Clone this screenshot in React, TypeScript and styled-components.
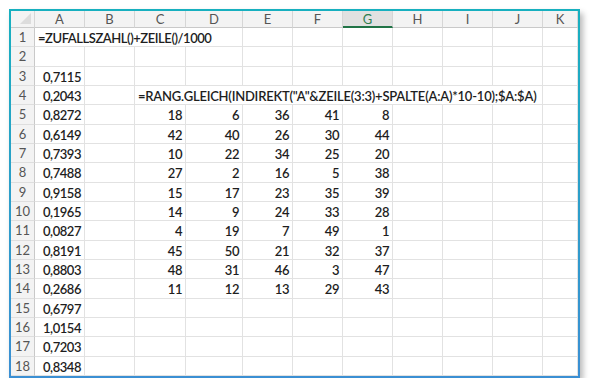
import React from "react"
import styled, { createGlobalStyle } from "styled-components"

const GlobalStyle = createGlobalStyle`
  html, body {
    margin: 0;
    padding: 0;
    background: #ffffff;
  }
`

const COLS = ["A", "B", "C", "D", "E", "F", "G", "H", "I", "J", "K"]

const Page = styled.div`
  padding: 9px 0 0 9px;
`

const Frame = styled.div`
  width: 571px;
  padding: 2px;
  box-sizing: border-box;
  background: linear-gradient(180deg, #17b0bf 0%, #2aa0c8 45%, #3b8fd3 100%);
  box-shadow: 3px 4px 6px rgba(0, 0, 0, 0.28);
`

const Sheet = styled.div`
  display: grid;
  grid-template-columns: 24px 50px 50px 51px 57px repeat(6, 50px) 35px;
  grid-template-rows: 17px repeat(18, 19.33px);
  background: #ffffff;
  font-family: Lato, "Liberation Sans", sans-serif;
  font-size: 13px;
  letter-spacing: -0.45px;
  color: #1e1e1e;
  overflow: hidden;
`

const Corner = styled.div`
  position: relative;
  background: #f3f3f3;
  border-right: 1px solid #d6d6d6;
  border-bottom: 1px solid #c9c9c9;

  &::after {
    content: "";
    position: absolute;
    right: 3px;
    bottom: 3px;
    border-left: 11px solid transparent;
    border-bottom: 11px solid #dcdcdc;
  }
`

const ColHeader = styled.div<{ $selected?: boolean }>`
  display: flex;
  align-items: center;
  justify-content: center;
  box-sizing: border-box;
  background: ${p => (p.$selected ? "#e1e1e1" : "#f3f3f3")};
  color: ${p => (p.$selected ? "#2f7d4f" : "#555555")};
  border-right: 1px solid #d6d6d6;
  border-bottom: ${p => (p.$selected ? "2px solid #217346" : "1px solid #c9c9c9")};
  font-size: 13px;
  letter-spacing: 0;
`

const RowHeader = styled.div`
  display: flex;
  align-items: center;
  justify-content: center;
  background: #f3f3f3;
  color: #555555;
  border-right: 1px solid #c9c9c9;
  border-bottom: 1px solid #dedede;
  font-size: 13px;
  letter-spacing: 0;
`

const Cell = styled.div<{ $align: "left" | "right"; $span: number; $tracking: number }>`
  grid-column: span ${p => p.$span};
  display: flex;
  align-items: center;
  justify-content: ${p => (p.$align === "right" ? "flex-end" : "flex-start")};
  padding: 2px 3px 0 3px;
  box-sizing: border-box;
  border-right: 1px solid #e2e2e2;
  border-bottom: 1px solid #e2e2e2;
  white-space: nowrap;
  font-weight: 600;
  letter-spacing: ${p => p.$tracking}px;
`

type Entry = { text: string; col: number; span?: number; left?: boolean; tracking?: number }

const aValues = [
  "0,7115", "0,2043", "0,8272", "0,6149", "0,7393", "0,7488", "0,9158", "0,1965",
  "0,0827", "0,8191", "0,8803", "0,2686", "0,6797", "1,0154", "0,7203", "0,8348",
]

const ranks = [
  [18, 6, 36, 41, 8],
  [42, 40, 26, 30, 44],
  [10, 22, 34, 25, 20],
  [27, 2, 16, 5, 38],
  [15, 17, 23, 35, 39],
  [14, 9, 24, 33, 28],
  [4, 19, 7, 49, 1],
  [45, 50, 21, 32, 37],
  [48, 31, 46, 3, 47],
  [11, 12, 13, 29, 43],
]

function rowEntries(row: number): Entry[] {
  const list: Entry[] = []
  if (row === 1) list.push({ text: "=ZUFALLSZAHL()+ZEILE()/1000", col: 0, span: 4, left: true })
  if (row >= 3) list.push({ text: aValues[row - 3], col: 0 })
  if (row === 4)
    list.push({
      text: '=RANG.GLEICH(INDIREKT("A"&ZEILE(3:3)+SPALTE(A:A)*10-10);$A:$A)',
      col: 2,
      span: 8,
      left: true,
      tracking: -0.22,
    })
  if (row >= 5 && row <= 14)
    ranks[row - 5].forEach((n, i) => list.push({ text: String(n), col: 2 + i }))
  return list
}

const SheetRow = ({ row }: { row: number }) => {
  const entries = rowEntries(row)
  const cells: React.ReactNode[] = []
  let c = 0
  while (c < COLS.length) {
    const e = entries.find(x => x.col === c)
    const span = e?.span ?? 1
    cells.push(
      <Cell key={c} $align={e?.left ? "left" : "right"} $span={span} $tracking={e?.tracking ?? -0.45}>
        {e?.text ?? ""}
      </Cell>
    )
    c += span
  }
  return (
    <>
      <RowHeader>{row}</RowHeader>
      {cells}
    </>
  )
}

export default function App() {
  return (
    <>
      <GlobalStyle />
      <Page>
        <Frame>
          <Sheet>
            <Corner />
            {COLS.map(l => (
              <ColHeader key={l} $selected={l === "G"}>
                {l}
              </ColHeader>
            ))}
            {Array.from({ length: 18 }, (_, i) => (
              <SheetRow key={i} row={i + 1} />
            ))}
          </Sheet>
        </Frame>
      </Page>
    </>
  )
}
